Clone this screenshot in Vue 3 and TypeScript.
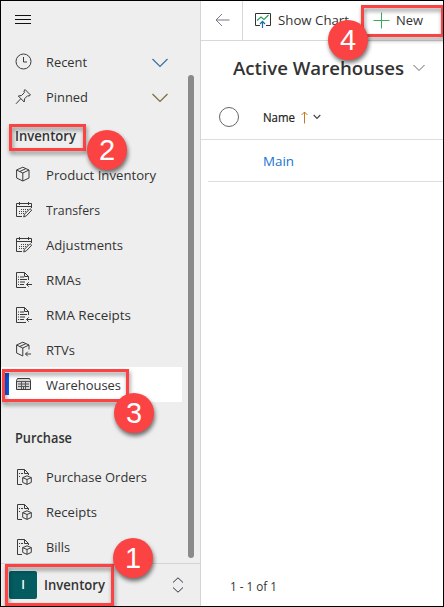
<script setup lang="ts">
type IconName = 'clock' | 'pin' | 'box' | 'calendar' | 'receipt' | 'return' | 'warehouse' | 'order'
interface NavItem { label: string; icon: IconName; w: number; selected?: boolean; chevron?: string }
interface NavGroup { title: string; w: number; items: NavItem[] }

const icons: Record<IconName, string[]> = {
  clock: ['M8.5 1a7.5 7.5 0 1 1 0 15a7.5 7.5 0 0 1 0-15Z', 'M8.5 4v5H12'],
  pin: ['M10 1.5L15.5 7L14 8L12.5 7.8L9.5 10.8L9.2 14L3.3 8L6.5 7.5L9.3 4.7L9 3ZM5.7 10.8L1 15.8'],
  box: ['M7.8 1.2L14 4V12L7.8 15L1.6 12V4ZM1.6 4L7.8 7L14 4M7.8 7V15M4.7 5.5L11 2.6'],
  calendar: ['M7 15.5H1.5V2.5H16.5V7M1.5 5.5H16.5M4.5 1V4M13.5 1V4', 'M8.7 16L9.5 13.2L15 7.7L16.7 9.2L11.3 14.9Z'],
  receipt: ['M13.5 9V5.5L9.5 1.5H1.5V16.5H11M9.5 1.5V5.5H13.5M3 6H4M5 6H9M3 8.5H4M5 8.5H12M3 11H4M5 11H10M3 13.5H4M5 13.5H9', 'M17 13.5H11.5M13.7 11.3L11.5 13.5L13.7 15.7'],
  return: ['M14 8.5V4L7.8 1.2L1.6 4V12L7.8 15V7L1.6 4M7.8 7L14 4M4.7 5.5L11 2.6', 'M16 13H10.5M12.8 10.7L10.5 13L12.8 15.3'],
  warehouse: [],
  order: ['M7 16.5H2.5V1.5H9.5L13.5 5.5V7M9.5 1.5V5.5H13.5M4 5.5H5M6 5.5H8M4 8.5H5', 'M12 7.8L16.3 9.6V14.4L12 16.4L7.7 14.4V9.6ZM7.7 9.6L12 11.5L16.3 9.6M12 11.5V16.4'],
}

const groups: NavGroup[] = [
  { title: '', w: 0, items: [
    { label: 'Recent', icon: 'clock', w: 41, chevron: 'blue' },
    { label: 'Pinned', icon: 'pin', w: 42, chevron: 'gold' },
  ] },
  { title: 'Inventory', w: 61, items: [
    { label: 'Product Inventory', icon: 'box', w: 110 },
    { label: 'Transfers', icon: 'calendar', w: 54 },
    { label: 'Adjustments', icon: 'calendar', w: 77 },
    { label: 'RMAs', icon: 'receipt', w: 35 },
    { label: 'RMA Receipts', icon: 'receipt', w: 85 },
    { label: 'RTVs', icon: 'return', w: 29 },
    { label: 'Warehouses', icon: 'warehouse', w: 75, selected: true },
  ] },
  { title: 'Purchase', w: 57, items: [
    { label: 'Purchase Orders', icon: 'order', w: 101 },
    { label: 'Receipts', icon: 'order', w: 51 },
    { label: 'Bills', icon: 'order', w: 24 },
  ] },
]
</script>

<template>
  <div class="app">
    <aside class="sidebar">
      <div class="menu"><svg width="16" height="11" viewBox="0 0 16 11"><path d="M0 1.5H16M0 5.5H16M0 9.5H16" stroke="#111" fill="none" /></svg></div>
      <nav class="nav">
        <section v-for="(g, gi) in groups" :key="gi">
          <h2 v-if="g.title" class="group-title" :class="{ later: gi === 2 }">
            <svg :width="g.w + 3" height="24"><text x="0" y="17" :textLength="g.w" lengthAdjust="spacingAndGlyphs">{{ g.title }}</text></svg>
          </h2>
          <div v-for="item in g.items" :key="item.label" class="item" :class="{ selected: item.selected }">
            <span v-if="item.selected" class="marker"></span>
            <svg class="icon" width="18" height="18" viewBox="0 0 18 18">
              <path v-for="(d, i) in icons[item.icon]" :key="i" :d="d" />
              <path v-if="item.icon === 'calendar'" class="dots" d="M6 8.5H14M4 10.5H12M4 12.5H10" />
              <template v-if="item.icon === 'warehouse'">
                <path class="roof" d="M2.5 2.5H14.5L15.5 4.5V13.5H1.5V4.5Z" />
                <path class="windows" d="M1.5 5.5H15.5M3 8H14M3 10.5H14M6.5 6V13M10.5 6V13M8.5 11V13" />
              </template>
            </svg>
            <svg class="label" :width="item.w + 4" height="24"><text x="0" y="17" :textLength="item.w" lengthAdjust="spacingAndGlyphs">{{ item.label }}</text></svg>
            <svg v-if="item.chevron" class="expand" :class="item.chevron" width="16" height="10" viewBox="0 0 16 10"><path d="M.5 1L8 8.5L15.5 1" /></svg>
          </div>
        </section>
        <span class="scrollbar"></span>
      </nav>
      <footer class="area">
        <span class="tile">I</span>
        <svg class="area-name" width="72" height="24"><text x="0" y="17" textLength="61" lengthAdjust="spacingAndGlyphs">Inventory</text></svg>
        <svg class="updown" width="12" height="16" viewBox="0 0 12 16"><path d="M1 5.5L6 .8L11 5.5M1 10.5L6 15.2L11 10.5" fill="none" stroke="#334" /></svg>
      </footer>
    </aside>

    <main class="main">
      <header class="commands">
        <div class="back"><svg width="15" height="14" viewBox="0 0 15 14"><path d="M14.5 7H1M7 1L1 7L7 13" fill="none" stroke="#777783" /></svg></div>
        <svg class="chart" width="17" height="17" viewBox="0 0 17 17">
          <path d="M5 13.5H.5V1.5H15.5V13.5H11" stroke="#333" fill="none" />
          <path d="M2 8.5L6 5L9 7.5L13.5 3" stroke="#29a15a" fill="none" stroke-width="1.2" />
          <path d="M7.5 16V9.5M5 12L7.5 9.3L10 12" stroke="#176bad" fill="none" stroke-width="1.2" />
        </svg>
        <svg class="show" width="74" height="24"><text x="0" y="17" textLength="71" lengthAdjust="spacingAndGlyphs">Show Chart</text></svg>
        <svg class="plus" width="17" height="17" viewBox="0 0 17 17"><path d="M8.5 .5V16.5M.5 8.5H16.5" stroke="#3aaa5d" /></svg>
        <svg class="new" width="32" height="24"><text x="0" y="17" textLength="27" lengthAdjust="spacingAndGlyphs">New</text></svg>
      </header>
      <div class="view">
        <svg width="174" height="30"><text x="0" y="22" textLength="171" lengthAdjust="spacingAndGlyphs">Active Warehouses</text></svg>
        <svg class="view-chevron" width="12" height="8" viewBox="0 0 12 8"><path d="M.5 1L6 6.5L11.5 1" fill="none" stroke="#666" /></svg>
      </div>
      <div class="thead">
        <span class="radio"></span>
        <svg class="name" width="35" height="22"><text x="0" y="16" textLength="32" lengthAdjust="spacingAndGlyphs">Name</text></svg>
        <svg class="sort" width="7" height="13" viewBox="0 0 7 13"><path d="M3.5 12.5V1M.5 4L3.5 1L6.5 4" fill="none" stroke="#c47a24" /></svg>
        <svg width="8" height="6" viewBox="0 0 8 6"><path d="M.7 1L4 4.3L7.3 1" fill="none" stroke="#444" stroke-width="1.2" /></svg>
      </div>
      <div class="row"><svg width="34" height="24"><text x="0" y="17" textLength="31" lengthAdjust="spacingAndGlyphs">Main</text></svg></div>
      <div class="count"><svg width="52" height="20"><text x="0" y="15" textLength="47" lengthAdjust="spacingAndGlyphs">1 - 1 of 1</text></svg></div>
    </main>

    <div class="frame f1"></div><div class="badge b1">1</div>
    <div class="frame f2"></div><div class="badge b2">2</div>
    <div class="frame f3"></div><div class="badge b3">3</div>
    <div class="frame f4"></div><div class="badge b4">4</div>
  </div>
</template>

<style>
body { margin: 0; overflow: hidden; }
</style>

<style scoped>
* { box-sizing: border-box; }
.app { position: relative; display: flex; width: 444px; height: 607px; border: 1px solid #000; background: #fff; overflow: hidden; font-family: "Open Sans", "Noto Sans", sans-serif; color: #333; }
svg { display: block; flex: none; }
text { fill: #333; font-size: 13.5px; }
.sidebar { display: flex; flex-direction: column; flex: none; width: 200px; background: #eee; border-right: 1px solid #d4d4d4; }
.menu { height: 43px; padding: 13px 0 0 14px; }
.nav { position: relative; height: 519px; }
.item { position: relative; display: flex; align-items: center; width: 181px; height: 35px; padding-left: 14px; }
.selected { background: #fff; }
.marker { position: absolute; left: 4px; top: 6px; width: 4px; height: 22px; background: #0c5bea; }
.icon { fill: none; stroke: #3b3b3b; stroke-width: 1; }
.dots { stroke-dasharray: 1 1; stroke: #444; }
.roof { fill: #d5d5d5; }
.windows { stroke: #555; }
.label { margin-left: 13px; }
.expand { position: absolute; left: 151px; top: 14px; fill: none; stroke-width: 1.2; }
.blue { stroke: #386f9f; }
.gold { stroke: #80673c; }
.group-title { height: 43px; margin: 0; padding: 10px 0 0 14px; }
.group-title text, .area-name text { font-size: 13.5px; font-weight: 600; }
.later { height: 57px; padding-top: 24px; }
.scrollbar { position: absolute; left: 187px; top: 31px; width: 6px; height: 483px; border-radius: 3px; background: #8a8a8a; }
.area { display: flex; align-items: center; flex: 1; border-top: 1px solid #d4d4d4; padding-left: 8px; }
.tile { display: flex; align-items: center; justify-content: center; width: 28px; height: 28px; border-radius: 2px; background: #045b60; color: #fff; font-size: 12px; font-weight: 600; padding-bottom: 2px; }
.area-name { margin-left: 7px; }
.updown { margin-left: 56px; }
.main { flex: 1; min-width: 0; display: flex; flex-direction: column; }
.commands { display: flex; align-items: center; height: 40px; border-bottom: 1px solid #d8d8d8; padding-bottom: 1px; }
.back { display: flex; align-items: center; width: 42px; height: 39px; margin-bottom: -1px; padding: 0 0 2px 14px; border-right: 1px solid #d8d8d8; }
.chart { margin-left: 12px; }
.show { margin-left: 6px; }
.plus { margin-left: 21px; }
.new { margin-left: 6px; }
.view { display: flex; align-items: center; height: 54px; padding-left: 32px; }
.view text { font-size: 18.8px; font-weight: 600; }
.view-chevron { margin-left: 6px; }
.thead { display: flex; align-items: center; height: 45px; padding: 0 0 0 18px; border-bottom: 1px solid #ddd; }
.radio { width: 20px; height: 20px; border: 1px solid #666; border-radius: 50%; }
.name { margin-left: 24px; }
.name text { font-size: 11.8px; fill: #222; stroke: #222; stroke-width: .2px; }
.sort { margin: 0 5px 0 3px; }
.row { display: flex; align-items: center; height: 42px; margin-left: 7px; padding-left: 55px; border-bottom: 1px solid #ddd; }
.row text { fill: #1675cf; }
.count { margin-top: auto; padding: 0 0 10px 29px; }
.count text { font-size: 11.8px; }
.frame { position: absolute; border: 3px solid #fb4343; filter: drop-shadow(1px 3px 2px rgba(0, 0, 0, .45)); }
.badge { position: absolute; display: flex; align-items: center; justify-content: center; width: 40px; height: 40px; border-radius: 50%; background: #fb4343; color: #fff; font: 29px/40px "Liberation Sans", sans-serif; box-shadow: 1px 3px 4px rgba(0, 0, 0, .55); }
.f1 { left: 4px; top: 563px; width: 109px; height: 42px; }
.f2 { left: 8px; top: 123px; width: 77px; height: 27px; }
.f3 { left: 1px; top: 368px; width: 127px; height: 33px; }
.f4 { left: 360px; top: 4px; width: 83px; height: 32px; }
.b1 { left: 112px; top: 537px; }
.b2 { left: 86px; top: 129px; }
.b3 { left: 113px; top: 392px; }
.b4 { left: 327px; top: 19px; }
</style>
